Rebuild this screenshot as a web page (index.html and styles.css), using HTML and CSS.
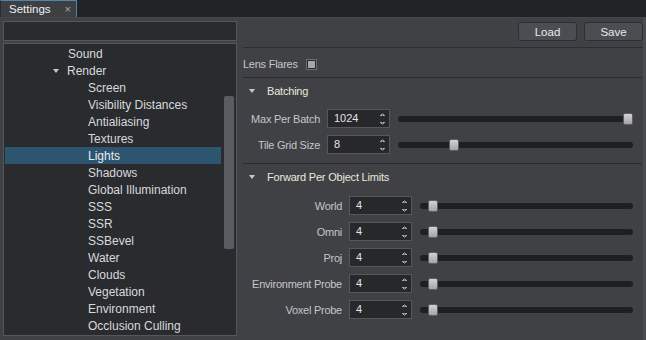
FILE: index.html
```html
<!DOCTYPE html>
<html lang="en">
<head>
    <meta charset="UTF-8">
    <title>Settings</title>
    <link rel="stylesheet" href="styles.css">
</head>
<body>

    <div class="topbar">
        <div class="tab">
            <span>Settings</span>
            <span class="tab-close">&times;</span>
        </div>
    </div>

    <div class="main">
        <!-- settings tree -->
        <div class="left">
            <div class="search"></div>
            <div class="tree">
                <ul class="tree-list">
                    <li class="lvl1">Sound</li>
                    <li class="lvl1 open"><span class="arrow"></span>Render</li>
                    <li class="lvl2">Screen</li>
                    <li class="lvl2">Visibility Distances</li>
                    <li class="lvl2">Antialiasing</li>
                    <li class="lvl2">Textures</li>
                    <li class="lvl2 selected">Lights</li>
                    <li class="lvl2">Shadows</li>
                    <li class="lvl2">Global Illumination</li>
                    <li class="lvl2">SSS</li>
                    <li class="lvl2">SSR</li>
                    <li class="lvl2">SSBevel</li>
                    <li class="lvl2">Water</li>
                    <li class="lvl2">Clouds</li>
                    <li class="lvl2">Vegetation</li>
                    <li class="lvl2">Environment</li>
                    <li class="lvl2">Occlusion Culling</li>
                </ul>
                <div class="tree-scroll"><div class="tree-thumb"></div></div>
            </div>
        </div>

        <!-- properties -->
        <div class="right">
            <div class="toolbar">
                <button class="btn">Load</button>
                <button class="btn">Save</button>
            </div>
            <div class="props">
                <div class="lens">
                    <span>Lens Flares</span>
                    <span class="check"></span>
                </div>

                <div class="group">
                    <div class="group-head"><span class="arrow"></span>Batching</div>
                    <div class="rows rows-batch">
                        <label>Max Per Batch</label>
                        <div class="spin">1024<span class="spin-btns"></span></div>
                        <div class="track"><div class="thumb" style="--v:1"></div></div>

                        <label>Tile Grid Size</label>
                        <div class="spin">8<span class="spin-btns"></span></div>
                        <div class="track"><div class="thumb" style="--v:0.227"></div></div>
                    </div>
                </div>

                <div class="group last">
                    <div class="group-head"><span class="arrow"></span>Forward Per Object Limits</div>
                    <div class="rows rows-limits">
                        <label>World</label>
                        <div class="spin">4<span class="spin-btns"></span></div>
                        <div class="track"><div class="thumb" style="--v:0.04"></div></div>

                        <label>Omni</label>
                        <div class="spin">4<span class="spin-btns"></span></div>
                        <div class="track"><div class="thumb" style="--v:0.04"></div></div>

                        <label>Proj</label>
                        <div class="spin">4<span class="spin-btns"></span></div>
                        <div class="track"><div class="thumb" style="--v:0.04"></div></div>

                        <label>Environment Probe</label>
                        <div class="spin">4<span class="spin-btns"></span></div>
                        <div class="track"><div class="thumb" style="--v:0.04"></div></div>

                        <label>Voxel Probe</label>
                        <div class="spin">4<span class="spin-btns"></span></div>
                        <div class="track"><div class="thumb" style="--v:0.04"></div></div>
                    </div>
                </div>
            </div>
        </div>
    </div>

</body>
</html>
```

FILE: styles.css
```css
* {
    margin: 0;
    padding: 0;
    box-sizing: border-box;
}

body {
    width: 646px;
    height: 340px;
    overflow: hidden;
    background: #404145;
    font-family: "Liberation Sans", Arial, sans-serif;
    font-size: 11px;
    color: #c3c6ca;
}

/* tab strip */
.topbar {
    height: 18px;
    background: #222326;
    border-bottom: 1px solid #46474b;
}

.tab {
    width: 77px;
    height: 17px;
    display: flex;
    align-items: center;
    justify-content: space-between;
    padding: 0 5px 0 8px;
    background: #3d3f43;
    border-top: 1px solid #4f86b0;
    border-right: 1px solid #4f86b0;
    border-left: 1px solid #2a2b2e;
    color: #f0f0f0;
    font-size: 11.5px;
}

.tab-close {
    color: #a8a8a8;
    font-size: 11px;
}

.main {
    display: flex;
    height: 322px;
}

/* left column */
.left {
    width: 234px;
    margin-left: 3px;
    padding-top: 3px;
    display: flex;
    flex-direction: column;
    gap: 2px;
}

.search {
    height: 20px;
    background: #2a2b2e;
    border: 1px solid #56575b;
}

.tree {
    height: 293px;
    display: flex;
    background: #2a2b2e;
    border: 1px solid #56575b;
    padding: 1px 2px 1px 1px;
}

.tree-list {
    flex: 1;
    list-style: none;
    font-size: 12px;
    color: #d6dade;
}

.tree-list li {
    height: 17px;
    padding-top: 1px;
    white-space: nowrap;
    display: flex;
    align-items: center;
}

.tree-list .lvl1 {
    padding-left: 63px;
}

.tree-list .lvl1.open {
    padding-left: 48px;
}

.tree-list .lvl1.open .arrow {
    margin-right: 8px;
}

.tree-list .lvl2 {
    padding-left: 83px;
}

.tree-list .selected {
    background: #2d5570;
    color: #e8ecf0;
}

.arrow {
    width: 0;
    height: 0;
    border-left: 3.5px solid transparent;
    border-right: 3.5px solid transparent;
    border-top: 4px solid #c8c8c8;
    flex-shrink: 0;
}

.tree-scroll {
    width: 10px;
    margin-left: 3px;
}

.tree-thumb {
    margin-top: 51px;
    height: 153px;
    background: #5b5c61;
    border-radius: 2px;
}

/* right column */
.right {
    flex: 1;
    margin-left: 6px;
    display: flex;
    flex-direction: column;
    border-right: 3px solid #4a4b4f;
}

.toolbar {
    height: 29px;
    display: flex;
    justify-content: flex-end;
    align-items: flex-start;
    gap: 7px;
    padding-top: 4px;
}

.btn {
    width: 59px;
    height: 19px;
    background: #4c4d52;
    border: 1px solid #2e2f33;
    border-radius: 3px;
    color: #eaeaea;
    font-family: inherit;
    font-size: 11.5px;
}

.props {
    flex: 1;
    border-top: 1px solid #2d2e31;
    padding-right: 1px;
}

.lens {
    display: flex;
    align-items: center;
    gap: 8px;
    height: 30px;
    padding-top: 3px;
    letter-spacing: -0.25px;
    border-bottom: 1px solid #2b2c2f;
}

.check {
    width: 11px;
    height: 11px;
    border: 1px solid #6c6d71;
    background: #a6a7aa;
    box-shadow: inset 0 0 0 1px #2a2b2e;
}

.group {
    border-bottom: 1px solid #2b2c2f;
}

.group.last {
    border-bottom: none;
}

.group-head {
    height: 26px;
    display: flex;
    align-items: center;
    gap: 12px;
    padding-left: 6px;
    color: #e9e8dc;
    letter-spacing: -0.2px;
}

.rows {
    display: grid;
    row-gap: 7px;
    column-gap: 7px;
    align-items: center;
    padding: 5px 9px 9px 0;
}

.rows-batch {
    grid-template-columns: 77px 63px 1fr;
}

.rows-limits {
    padding-top: 6px;
    grid-template-columns: 99px 63px 1fr;
}

.rows label {
    text-align: right;
    letter-spacing: -0.25px;
    white-space: nowrap;
}

.spin {
    position: relative;
    height: 19px;
    line-height: 17px;
    padding-left: 6px;
    background: #27282b;
    border: 1px solid #56575b;
    color: #e4e4e4;
}

.spin-btns {
    position: absolute;
    right: 4px;
    top: 2px;
    width: 5px;
    height: 13px;
    background:
        linear-gradient(to bottom right, transparent 50%, #a9a9a9 50%) left 0 top 1px / 2.5px 3px no-repeat,
        linear-gradient(to bottom left, transparent 50%, #a9a9a9 50%) right 0 top 1px / 2.5px 3px no-repeat,
        linear-gradient(to top right, transparent 50%, #a9a9a9 50%) left 0 bottom 0 / 2.5px 3px no-repeat,
        linear-gradient(to top left, transparent 50%, #a9a9a9 50%) right 0 bottom 0 / 2.5px 3px no-repeat;
}

.track {
    position: relative;
    margin-left: 1px;
    height: 6px;
    background: #1e1f21;
    border-radius: 3px;
}

.thumb {
    position: absolute;
    top: -3px;
    left: calc(var(--v) * (100% - 10px));
    width: 10px;
    height: 12px;
    border-radius: 2px;
    border: 1px solid #5e5f62;
    background: linear-gradient(#d2d2d2, #a4a4a4);
}
```
